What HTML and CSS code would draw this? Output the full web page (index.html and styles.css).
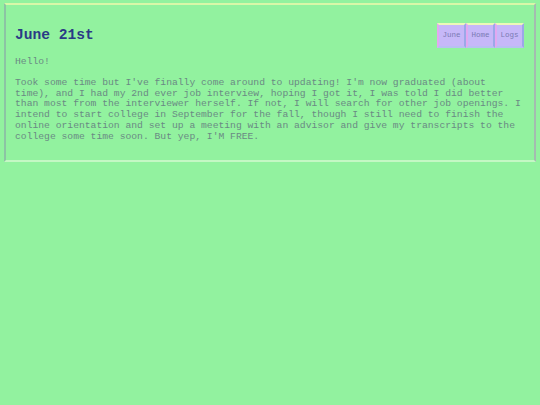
FILE: index.html
```html
<!DOCTYPE html>
<html>
<head>
<meta charset="utf-8">
<link rel="stylesheet" href="styles.css">
</head>
<body>
<div class="page">
  <div class="header">
    <h1 class="title">June 21st</h1>
    <nav class="nav">
      <a class="btn" href="#">June</a>
      <a class="btn" href="#">Home</a>
      <a class="btn" href="#">Logs</a>
    </nav>
  </div>
  <p class="text">Hello!</p>
  <p class="text">Took some time but I've finally come around to updating! I'm now graduated (about time), and I had my 2nd ever job interview, hoping I got it, I was told I did better than most from the interviewer herself. If not, I will search for other job openings. I intend to start college in September for the fall, though I still need to finish the online orientation and set up a meeting with an advisor and give my transcripts to the college some time soon. But yep, I'M FREE.</p>
</div>
</body>
</html>
```
FILE: styles.css
```css
html, body {
  margin: 0;
  padding: 0;
  background: #92f29f;
}
body {
  font-family: "Liberation Mono", "Courier New", monospace;
}
.page {
  margin: 3px 4px 0 4px;
  border-style: solid;
  border-width: 2px;
  border-top-color: #d9f7a8;
  border-left-color: #8cc4a4;
  border-right-color: #a4bcb0;
  border-bottom-color: #c4f8c4;
  padding: 18px 9px 17px 9px;
}
.header {
  display: flex;
  justify-content: space-between;
  align-items: flex-start;
}
.title {
  margin: 3px 0 0 0;
  font-size: 14.6px;
  font-weight: bold;
  color: #2a3a86;
  line-height: 18px;
}
.nav {
  display: flex;
  margin-right: 1px;
}
.btn {
  display: block;
  width: 25px;
  height: 21px;
  line-height: 21px;
  text-align: center;
  font-size: 7.5px;
  color: #7a7ab4;
  text-decoration: none;
  background: #c6b8f8;
  border-style: solid;
  border-width: 2px;
  border-top-color: #ecf8b8;
  border-left-color: #e2a8f0;
  border-right-color: #9ca8e8;
  border-bottom-color: #b8c0f0;
}
.text {
  margin: 9px 0 0 0;
  font-size: 9.7px;
  line-height: 10.8px;
  color: #6a8a84;
}
.text + .text {
  margin-top: 10px;
}
```
